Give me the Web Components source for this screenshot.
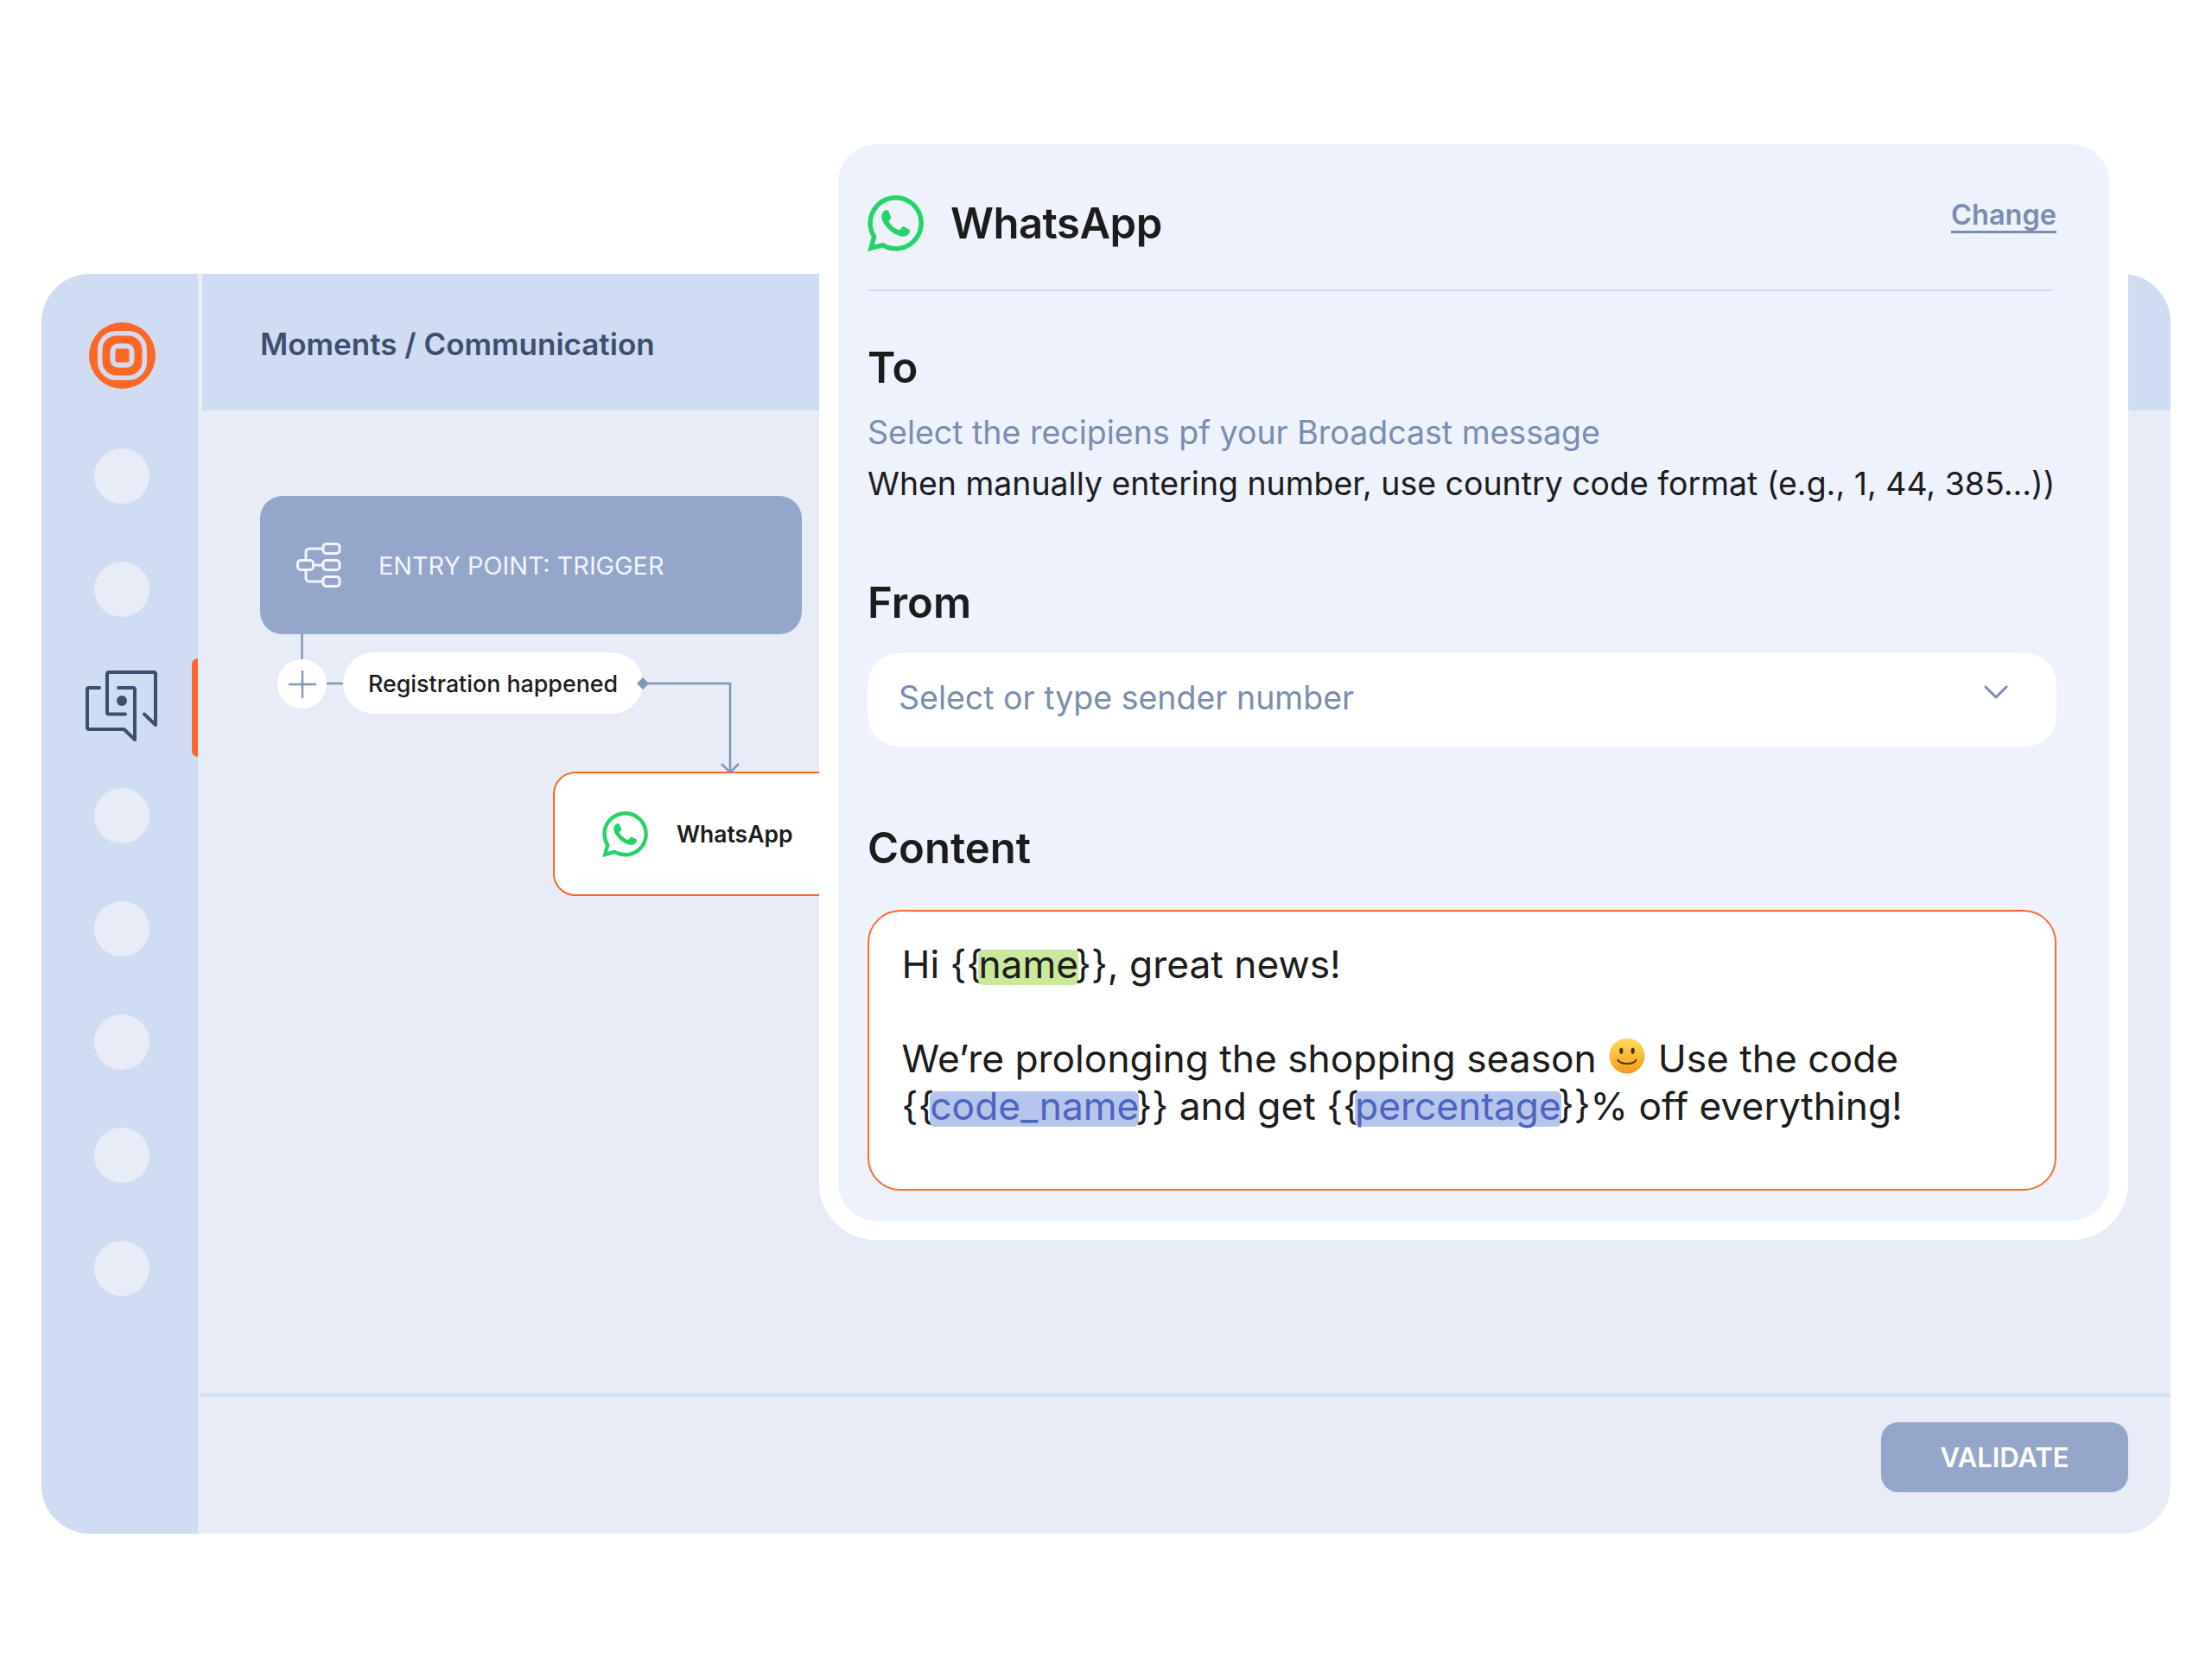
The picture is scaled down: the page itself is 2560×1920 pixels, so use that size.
<!DOCTYPE html>
<html>
<head>
<meta charset="utf-8">
<title>Moments / Communication</title>
<style>
  html, body { margin: 0; background: #fff; }
  body { width: 2560px; height: 1920px; padding: 317px 48px 0; box-sizing: border-box; font-family: Inter, "Liberation Sans", sans-serif; color: #1c1c1c; }
</style>
</head>
<body>
<app-shell>
  <side-nav slot="nav"></side-nav>
  <span slot="title">Moments / Communication</span>
  <flow-canvas slot="canvas"></flow-canvas>
  <action-button slot="action">VALIDATE</action-button>
  <compose-panel slot="panel">
    <message-box>
      <p>Hi {{<var-tag kind="green">name</var-tag>}}, great news!</p>
      <p>We’re prolonging the shopping season <smile-face></smile-face> Use the code<br>{{<var-tag>code_name</var-tag>}} and get {{<var-tag>percentage</var-tag>}}% off everything!</p>
    </message-box>
  </compose-panel>
</app-shell>

<script>
const waPath = "M17.472 14.382c-.297-.149-1.758-.867-2.03-.967-.273-.099-.471-.148-.67.15-.197.297-.767.966-.94 1.164-.173.199-.347.223-.644.075-.297-.15-1.255-.463-2.39-1.475-.883-.788-1.48-1.761-1.653-2.059-.173-.297-.018-.458.13-.606.134-.133.298-.347.446-.52.149-.174.198-.298.298-.497.099-.198.05-.371-.025-.52-.075-.149-.669-1.612-.916-2.207-.242-.579-.487-.5-.669-.51-.173-.008-.371-.01-.57-.01-.198 0-.52.074-.792.372-.272.297-1.04 1.016-1.04 2.479 0 1.462 1.065 2.875 1.213 3.074.149.198 2.096 3.2 5.077 4.487.709.306 1.262.489 1.694.625.712.227 1.36.195 1.871.118.571-.085 1.758-.719 2.006-1.413.248-.694.248-1.289.173-1.413-.074-.124-.272-.198-.57-.347m-5.421 7.403h-.004a9.87 9.87 0 01-5.031-1.378l-.361-.214-3.741.982.998-3.648-.235-.374a9.86 9.86 0 01-1.51-5.26c.001-5.45 4.436-9.884 9.888-9.884 2.64 0 5.122 1.03 6.988 2.898a9.825 9.825 0 012.893 6.994c-.003 5.45-4.437 9.884-9.885 9.884m8.413-18.297A11.815 11.815 0 0012.05 0C5.495 0 .16 5.335.157 11.892c0 2.096.547 4.142 1.588 5.945L.057 24l6.305-1.654a11.882 11.882 0 005.683 1.448h.005c6.554 0 11.89-5.335 11.893-11.893a11.821 11.821 0 00-3.48-8.413z";

class AppShell extends HTMLElement {
  constructor() {
    super();
    this.attachShadow({ mode: "open" });
    this.shadowRoot.innerHTML = `
    <style>
      :host { display: block; position: relative; width: 2464px; height: 1458px; }
      .frame { display: grid; grid-template-columns: 181px 1fr; width: 100%; height: 100%; border-radius: 56px; overflow: hidden; background: #e7ecf7; }
      .main { display: flex; flex-direction: column; min-width: 0; }
      header { height: 158px; margin-left: 5px; background: #d0dcf2; display: flex; align-items: center; padding-left: 67px; padding-top: 4px; box-sizing: border-box;
        font-size: 35px; font-weight: 600; color: #3d4f6f; }
      .canvas { flex: 1; position: relative; }
      footer { height: 163px; margin-left: 3px; border-top: 5px solid #d3dff3; display: flex; justify-content: flex-end; align-items: flex-start; padding: 29px 49px 0 0; box-sizing: border-box; }
      ::slotted([slot="panel"]) { position: absolute; left: 900px; top: -172px; }
    </style>
    <div class="frame">
      <slot name="nav"></slot>
      <div class="main">
        <header><slot name="title"></slot></header>
        <div class="canvas"><slot name="canvas"></slot></div>
        <footer><slot name="action"></slot></footer>
      </div>
    </div>
    <slot name="panel"></slot>`;
  }
}

class SideNav extends HTMLElement {
  constructor() {
    super();
    this.attachShadow({ mode: "open" });
    const dot = '<i class="dot"></i>';
    this.shadowRoot.innerHTML = `
    <style>
      :host { display: block; background: #d0dcf2; height: 100%; }
      nav { display: flex; flex-direction: column; align-items: center; padding-top: 56px; }
      .logo { width: 77px; height: 77px; display: block; margin: 0 0 69px 5px; }
      .dot { display: block; width: 64px; height: 64px; border-radius: 50%; background: #e7ecf7; margin: 0 0 67px 5px; flex: none; }
      .active { width: 100%; height: 114px; display: flex; justify-content: center; align-items: center; position: relative; margin: -19px 0 36px; }
      .active svg { width: 83px; height: 83px; margin: -4px 0 0 4px; }
      .active::after { content: ""; position: absolute; right: 0; top: 0; bottom: 0; width: 7px; background: #ff6726; border-radius: 7px 0 0 7px; }
    </style>
    <nav>
      <svg class="logo" viewBox="0 0 77 77">
        <circle cx="38.5" cy="38.5" r="38.5" fill="#ff6726"/>
        <rect x="10" y="10" width="57" height="57" rx="21" fill="#d0dcf2"/>
        <rect x="15.5" y="15.5" width="46" height="46" rx="16" fill="#ff6726"/>
        <rect x="24.5" y="24.5" width="28" height="28" rx="9" fill="#d0dcf2"/>
        <rect x="30.5" y="30.5" width="16" height="16" rx="2.5" fill="#ff6726"/>
      </svg>
      ${dot}${dot}
      <div class="active">
        <svg viewBox="0 0 83 83" fill="none" stroke="#3d4f6f" stroke-width="4" stroke-linecap="round" stroke-linejoin="round">
          <path d="M16 20H4a2 2 0 0 0-2 2V66a2 2 0 0 0 2 2H44.500L57 80V22a2 2 0 0 0-2-2H38"/>
          <path d="M46 50.500H27a2 2 0 0 1-2-2V4a2 2 0 0 1 2-2H79a2 2 0 0 1 2 2V63L68 50.500"/>
          <circle cx="42" cy="35" r="6" fill="#3d4f6f" stroke="none"/>
        </svg>
      </div>
      ${dot}${dot}${dot}${dot}${dot}
    </nav>`;
  }
}

class WaIcon extends HTMLElement {
  constructor() {
    super();
    this.attachShadow({ mode: "open" });
    this.shadowRoot.innerHTML = `
    <style>
      :host { display: block; width: var(--size, 52px); height: var(--size, 52px); flex: none; }
      svg { display: block; width: 100%; height: 100%; fill: #25d366; }
    </style>
    <svg viewBox="0 0 24 24"><path d="${waPath}"/></svg>`;
  }
}

class FlowCanvas extends HTMLElement {
  constructor() {
    super();
    this.attachShadow({ mode: "open" });
    // canvas origin is the page point 234,475
    this.shadowRoot.innerHTML = `
    <style>
      :host { display: block; position: absolute; inset: 0 0 0 5px; overflow: hidden; }
      .node { position: absolute; box-sizing: border-box; display: flex; align-items: center; }
      .entry { left: 67px; top: 99px; width: 627px; height: 160px; background: #94a6ca; border-radius: 26px; padding-left: 42px; gap: 43px; color: #f2f5fb; font-size: 28.800px; }
      .entry svg { width: 52px; height: 52px; flex: none; }
      .pill { left: 163px; top: 280px; width: 347px; height: 71px; background: #fff; border-radius: 36px; padding-left: 29px; font-size: 26.800px; font-weight: 500; color: #1c1c1c; }
      .plus { left: 87px; top: 288px; width: 57px; height: 57px; border-radius: 50%; background: #fff; justify-content: center; }
      .plus svg { width: 32px; height: 32px; }
      .wa { left: 406px; top: 418px; width: 400px; height: 144px; background: #fff; border: 2.500px solid #ff6726; border-radius: 26px; padding-left: 55px; gap: 33px; font-size: 26.500px; font-weight: 600; color: #1c1c1c; }
      .lines { position: absolute; left: 0; top: 0; }
    </style>
    <div class="node entry">
      <svg viewBox="0 0 52 52" fill="none" stroke="#f2f5fb" stroke-width="3">
        <rect x="31" y="1.500" width="19" height="11" rx="3.500"/>
        <rect x="31" y="20.500" width="19" height="11" rx="3.500"/>
        <rect x="31" y="39.500" width="19" height="11" rx="3.500"/>
        <rect x="1.500" y="20.500" width="18" height="11" rx="3.500"/>
        <path d="M31 7H15a4 4 0 0 0-4 4v9.500M11 31.500V41a4 4 0 0 0 4 4H31M19.500 26H31"/>
      </svg>
      <span>ENTRY POINT: TRIGGER</span>
    </div>
    <div class="node plus">
      <svg viewBox="0 0 32 32" stroke="#8296b5" stroke-width="2.500"><path d="M16 0V32M0 16H32"/></svg>
    </div>
    <div class="node pill">Registration happened</div>
    <div class="node wa"><wa-icon style="--size:53px"></wa-icon><span>WhatsApp</span></div>
    <svg class="lines" width="760" height="440" fill="none" stroke="#8296b5" stroke-width="2.500">
      <path d="M115.500 259V288M144 316H163"/>
      <path d="M510 316H611V418"/>
      <path d="M601 409L611 419L621 409"/>
      <path d="M510 309L517 316L510 323L503 316Z" fill="#8296b5" stroke="none"/>
    </svg>`;
  }
}

class ActionButton extends HTMLElement {
  constructor() {
    super();
    this.attachShadow({ mode: "open" });
    this.shadowRoot.innerHTML = `
    <style>
      :host { display: flex; align-items: center; justify-content: center; width: 286px; height: 81px; border-radius: 20px; background: #94a6ca; color: #fff; font-size: 31px; font-weight: 600; }
    </style>
    <slot></slot>`;
  }
}

class ComposePanel extends HTMLElement {
  constructor() {
    super();
    this.attachShadow({ mode: "open" });
    this.shadowRoot.innerHTML = `
    <style>
      :host { display: block; width: 1515px; height: 1290px; box-sizing: border-box; border: 22px solid #fff; border-radius: 66px; background: #edf2fd; }
      .inner { padding: 59px 61px 0 34px; color: #1c1c1c; }
      .head { display: flex; align-items: center; gap: 31px; height: 65px; }
      .head h1 { margin: 0; font-size: 49px; font-weight: 600; letter-spacing: -0.5px; }
      .head a { margin-left: auto; align-self: flex-start; margin-top: 3px; font-size: 32.500px; font-weight: 600; color: #7a8db0; text-decoration: underline; text-underline-offset: 7px; text-decoration-thickness: 3px; text-decoration-skip-ink: none; }
      hr { border: 0; height: 2px; background: #d0dcf2; margin: 44px 4px 0 0; }
      h2 { margin: 0; font-size: 49px; font-weight: 600; line-height: 56px; }
      .to { margin-top: 61px; }
      .hint { margin: 25px 0 0; font-size: 37.500px; line-height: 44px; color: #7a8db0; }
      .note { margin: 15px 0 0; font-size: 37.450px; line-height: 44px; white-space: nowrap; }
      .from { margin-top: 88px; }
      select-field { margin-top: 30px; }
      .content { margin-top: 90px; }
      ::slotted(message-box) { margin-top: 43px; }
    </style>
    <div class="inner">
      <div class="head">
        <wa-icon style="--size:65px"></wa-icon>
        <h1>WhatsApp</h1>
        <a>Change</a>
      </div>
      <hr>
      <h2 class="to">To</h2>
      <p class="hint">Select the recipiens pf your Broadcast message</p>
      <p class="note">When manually entering number, use country code format (e.g., 1, 44, 385...))</p>
      <h2 class="from">From</h2>
      <select-field>Select or type sender number</select-field>
      <h2 class="content">Content</h2>
      <slot></slot>
    </div>`;
  }
}

class SelectField extends HTMLElement {
  constructor() {
    super();
    this.attachShadow({ mode: "open" });
    this.shadowRoot.innerHTML = `
    <style>
      :host { display: flex; align-items: center; justify-content: space-between; height: 108px; box-sizing: border-box; background: #fff; border-radius: 36px; padding: 0 55px 6px 36px; font-size: 37.500px; color: #7a8db0; }
      svg { width: 30px; height: 18px; margin-bottom: 12px; }
    </style>
    <slot></slot>
    <svg viewBox="0 0 30 18" fill="none" stroke="#7a8db0" stroke-width="3" stroke-linecap="round" stroke-linejoin="round"><path d="M3 3L15 15L27 3"/></svg>`;
  }
}

class MessageBox extends HTMLElement {
  constructor() {
    super();
    this.attachShadow({ mode: "open" });
    this.shadowRoot.innerHTML = `
    <style>
      :host { display: block; height: 325px; box-sizing: border-box; background: #fff; border: 2.500px solid #ff6b35; border-radius: 38px; padding: 34px 37.500px 0; font-size: 44.300px; line-height: 54.500px; color: #1c1c1c; }
      ::slotted(p) { margin: 0 0 54.500px; }
    </style>
    <slot></slot>`;
  }
}

class VarTag extends HTMLElement {
  constructor() {
    super();
    this.attachShadow({ mode: "open" });
    const green = this.getAttribute("kind") === "green";
    this.shadowRoot.innerHTML = `
    <style>
      :host { display: inline-block; height: 41px; line-height: 34px; margin: 0 -4px 0 -5px; border-radius: 6px; background: ${green ? "#cbe89b" : "#b6c5ec"}; color: ${green ? "#1c1c1c" : "#4f63c0"}; }
    </style>
    <slot></slot>`;
  }
}

class SmileFace extends HTMLElement {
  constructor() {
    super();
    this.attachShadow({ mode: "open" });
    this.shadowRoot.innerHTML = `
    <style>
      :host { display: inline-block; width: 44px; height: 42px; vertical-align: -2px; margin: 0 1px; }
      svg { display: block; width: 100%; height: 100%; }
    </style>
    <svg viewBox="0 0 44 44">
      <defs><linearGradient id="g" x1="0" y1="0" x2="0" y2="1"><stop offset="0" stop-color="#ffdc5a"/><stop offset="1" stop-color="#f59a1c"/></linearGradient></defs>
      <circle cx="22" cy="22" r="21.500" fill="url(#g)"/>
      <ellipse cx="15" cy="16" rx="2.200" ry="3.600" fill="#4a3212"/>
      <ellipse cx="29" cy="16" rx="2.200" ry="3.600" fill="#4a3212"/>
      <path d="M11 27c3 6 19 6 22 0" fill="none" stroke="#4a3212" stroke-width="2" stroke-linecap="round"/>
    </svg>`;
  }
}

customElements.define("app-shell", AppShell);
customElements.define("side-nav", SideNav);
customElements.define("wa-icon", WaIcon);
customElements.define("flow-canvas", FlowCanvas);
customElements.define("action-button", ActionButton);
customElements.define("compose-panel", ComposePanel);
customElements.define("select-field", SelectField);
customElements.define("message-box", MessageBox);
customElements.define("var-tag", VarTag);
customElements.define("smile-face", SmileFace);
</script>
</body>
</html>
